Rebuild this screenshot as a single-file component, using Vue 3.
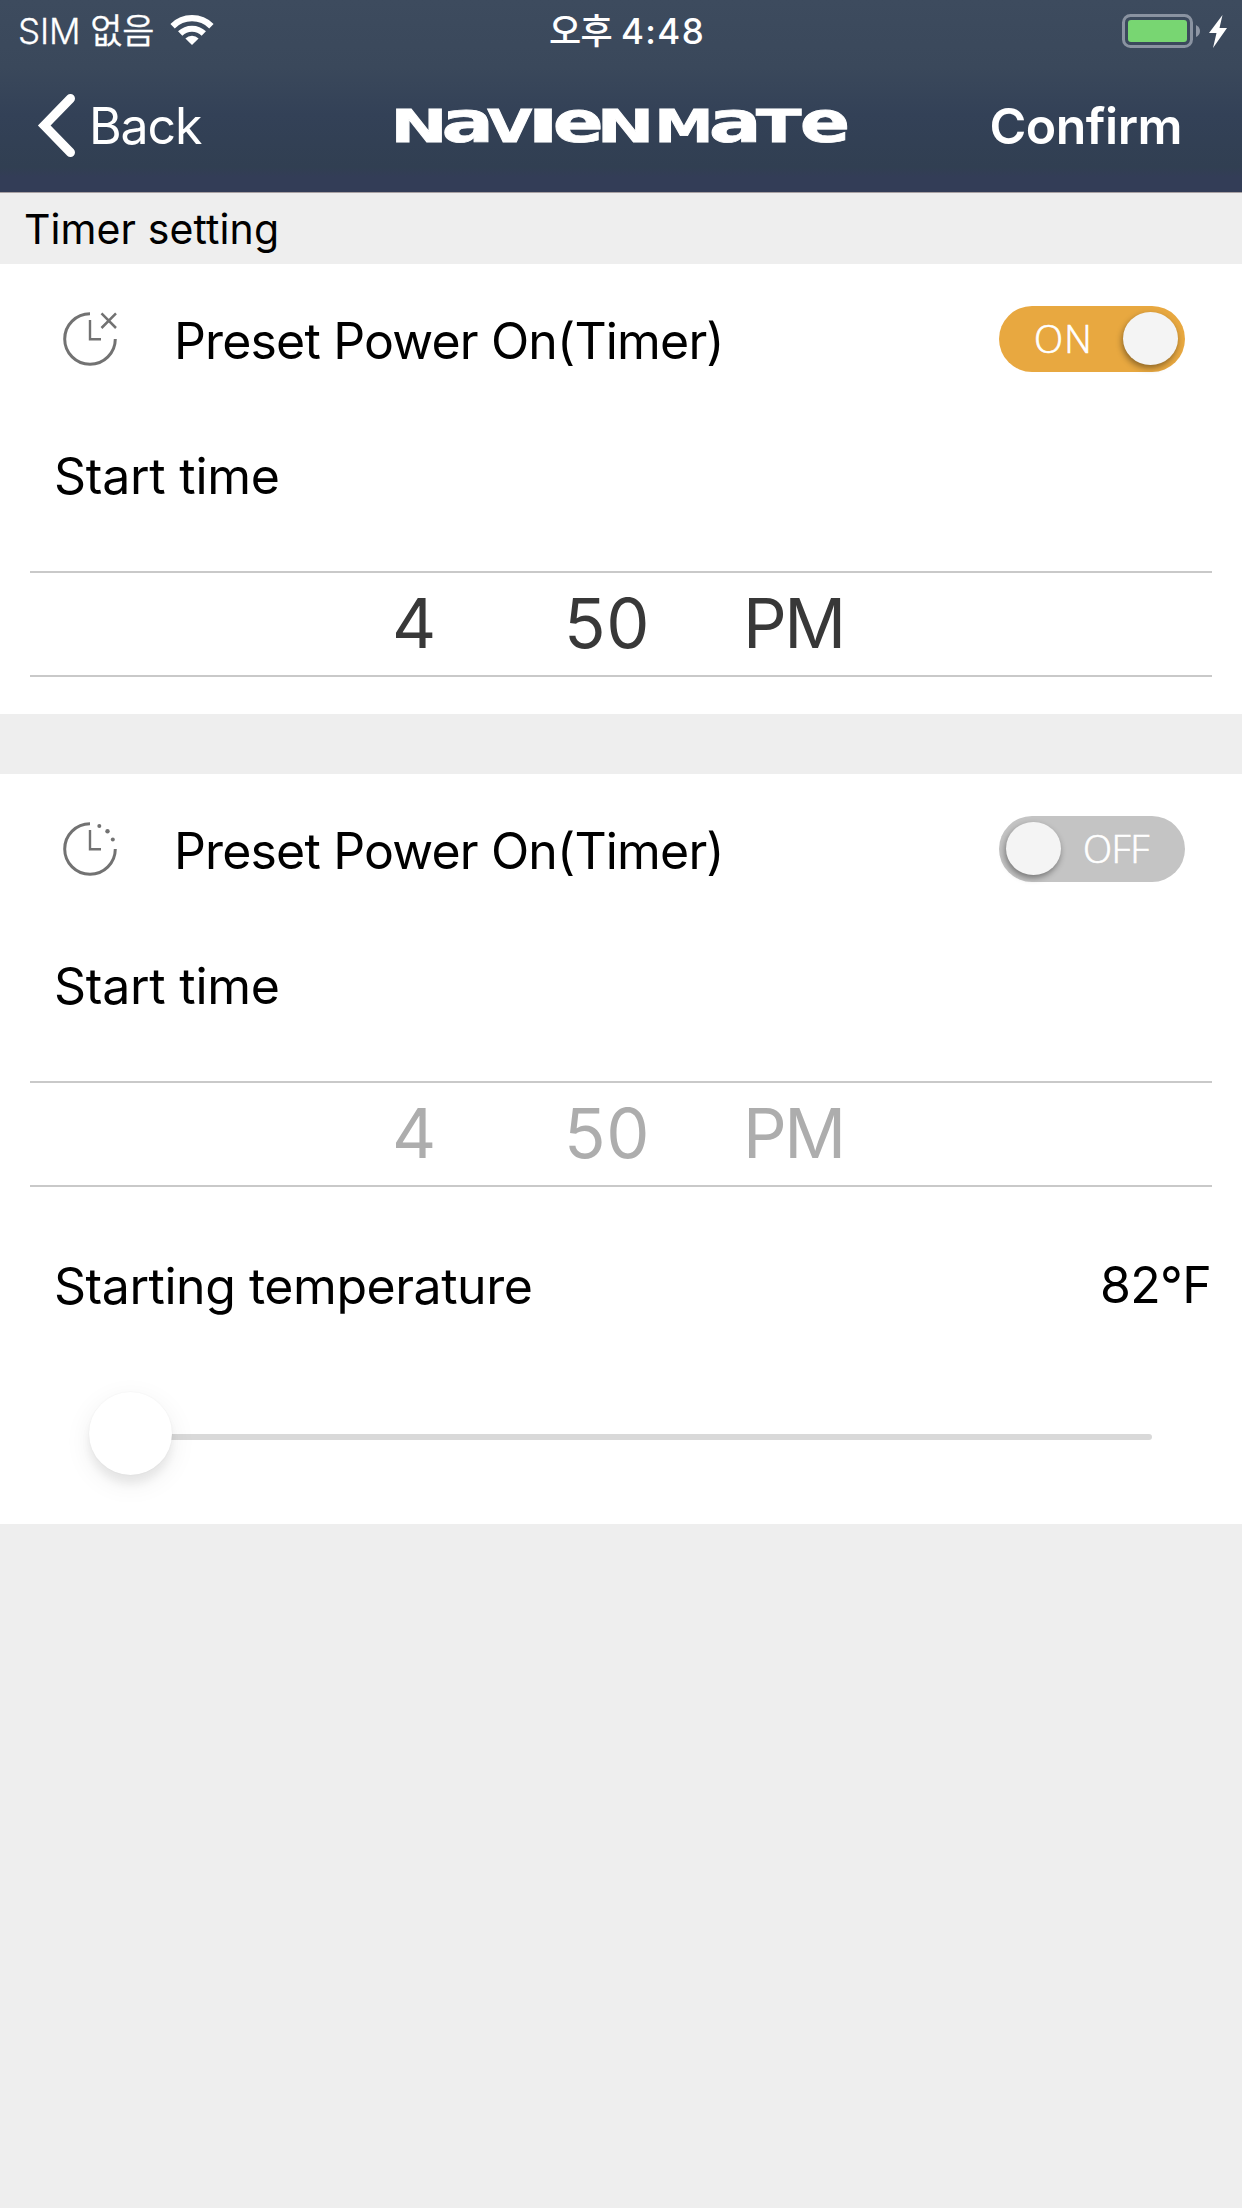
<script setup>
import { ref } from 'vue'

// Wordmark runs: lowercase forms are enlarged so every letter shares the cap height.
const wordmark = [
  { ch: 'N', x: 390.4, size: 44.5, width: 57 },
  { ch: 'a', x: 441.4, size: 57, width: 52.5 },
  { ch: 'V', x: 487.3, size: 44.5, width: 45 },
  { ch: 'I', x: 527.2, size: 44.5, width: 31.7 },
  { ch: 'e', x: 552.8, size: 57, width: 51 },
  { ch: 'N', x: 596.7, size: 44.5, width: 57.6 },
  { ch: 'M', x: 654.6, size: 44.5, width: 58.9 },
  { ch: 'a', x: 708.8, size: 57, width: 53 },
  { ch: 'T', x: 756, size: 44.5, width: 45.5 },
  { ch: 'e', x: 799.8, size: 57, width: 50.5 }
]

const timers = ref([
  { id: 'off', label: 'Preset Power On(Timer)', on: true, time: ['4', '50', 'PM'] },
  { id: 'on', label: 'Preset Power On(Timer)', on: false, time: ['4', '50', 'PM'], temperature: '82°F' }
])
</script>

<template>
  <div class="screen">
    <header class="header">
      <div class="status">
        <div class="status-left">
          <span class="carrier">SIM 없음</span>
          <svg class="wifi" width="44" height="32" viewBox="170 14 44 32">
            <g fill="none" stroke="#fff" stroke-width="6.2">
              <path d="M172.6 26.2A27.5 27.5 0 0 1 211.4 26.2" />
              <path d="M180.2 33.5A17 17 0 0 1 203.8 33.5" />
            </g>
            <path d="M192 45L185.4 38.6A9.3 9.3 0 0 1 198.6 38.6Z" fill="#fff" />
          </svg>
        </div>
        <div class="clock">오후 <span class="digits">4:48</span></div>
        <div class="status-right">
          <svg width="108" height="36" viewBox="1121 12 108 36">
            <rect x="1123.5" y="14.5" width="68" height="31" rx="7" fill="none" stroke="#8a93a1" stroke-width="3" />
            <rect x="1128" y="19" width="59" height="22" rx="3" fill="#78d672" />
            <path d="M1196 24Q1200 26 1200 30Q1200 34 1196 36Z" fill="#8f97a5" />
            <path d="M1222.5 14L1209 32H1216.5L1213 47L1227 27H1219.5Z" fill="#fff" />
          </svg>
        </div>
      </div>
      <nav class="nav">
        <div class="back">
          <svg width="40" height="66" viewBox="36 94 40 66">
            <path d="M70.5 99.5L44.2 126.5L70.5 153.5" fill="none" stroke="#fff" stroke-width="9" stroke-linecap="round" stroke-linejoin="miter" />
          </svg>
          <span>Back</span>
        </div>
        <svg class="logo" width="480" height="84" viewBox="382 84 480 84">
          <text y="142.4" fill="#fff" stroke="#fff" stroke-width="0.8"><tspan
            v-for="(g, i) in wordmark" :key="i" :x="g.x" :font-size="g.size" :textLength="g.width" lengthAdjust="spacingAndGlyphs">{{ g.ch }}</tspan></text>
        </svg>
        <span class="confirm">Confirm</span>
      </nav>
    </header>

    <h2 class="section">Timer setting</h2>

    <section v-for="t in timers" :key="t.id" class="card">
      <div class="preset">
        <svg class="icon" width="56" height="56" viewBox="0 0 56 56">
          <g fill="none" stroke="#727272">
            <path d="M28 2.700A25.300 25.300 0 1 0 53.300 28" stroke-width="3" />
            <path d="M28 9V28.200H39" stroke-width="2.400" />
            <path v-if="t.on" d="M39.500 2.300L54 17M54 2.300L39.500 17" stroke-width="2.500" />
          </g>
          <g v-if="!t.on" fill="#727272">
            <circle cx="37.300" cy="5" r="2" />
            <circle cx="45.500" cy="10.300" r="2.200" />
            <circle cx="50.800" cy="18.500" r="2" />
          </g>
        </svg>
        <span class="preset-label">{{ t.label }}</span>
        <div class="toggle" :class="{ on: t.on }" @click="t.on = !t.on">
          <span v-if="t.on" class="word">ON</span>
          <i class="knob"></i>
          <span v-if="!t.on" class="word">OFF</span>
        </div>
      </div>
      <div class="start">Start time</div>
      <div class="picker" :class="{ dim: !t.on }">
        <span class="hour">{{ t.time[0] }}</span>
        <span class="minute">{{ t.time[1] }}</span>
        <span class="period">{{ t.time[2] }}</span>
      </div>
      <template v-if="t.temperature">
        <div class="temp">
          <span class="temp-label">Starting temperature</span>
          <span class="temp-value">{{ t.temperature }}</span>
        </div>
        <div class="track"><i class="thumb"></i></div>
      </template>
    </section>
  </div>
</template>

<style>
body { background: #eee; }
</style>

<style scoped>
.screen {
  width: 1242px;
  height: 2208px;
  overflow: hidden;
  background: #eee;
  color: #000;
  font-family: Inter, 'Noto Sans CJK KR', sans-serif;
  font-size: 50px;
  line-height: 60px;
  white-space: nowrap;
}
.header {
  box-sizing: border-box;
  height: 193px;
  border-bottom: 1px solid #a8a1a3;
  background: linear-gradient(#3d4b5e 0%, #3a485b 35%, #334157 60%, #313f52 87%, #333d57 92%);
  color: #fff;
}
.status {
  display: grid;
  grid-template-columns: 1fr auto 1fr;
  height: 62px;
  align-items: center;
  font-size: 35px;
  line-height: 42px;
}
.status-left { display: flex; align-items: center; padding-left: 18px; }
.carrier { width: 136px; font-weight: 350; letter-spacing: -0.1px; -webkit-text-stroke: 0.3px #fff; }
.wifi { margin-left: 16px; margin-top: -2px; }
.clock { padding-left: 12px; font-weight: 500; letter-spacing: -0.6px; }
.digits { font-weight: 550; letter-spacing: 1.4px; }
.status-right { display: flex; justify-content: flex-end; padding-right: 13px; }
.status svg, .nav svg { display: block; }
.nav {
  display: grid;
  grid-template-columns: 382px 480px 1fr;
  align-items: center;
  height: 128px;
}
.back { display: flex; align-items: center; padding-left: 36px; gap: 13px; letter-spacing: -1.1px; }
.logo { font-family: 'DejaVu Sans', sans-serif; font-weight: 700; }
.confirm { justify-self: end; padding-right: 60px; font-weight: 600; letter-spacing: -0.5px; }
.section {
  margin: 0;
  height: 71px;
  padding-left: 24px;
  font-size: 41px;
  font-weight: 400;
  line-height: 72px;
  letter-spacing: 0.1px;
}
.card {
  height: 450px;
  background: #fff;
}
.card + .card { height: 750px; margin-top: 60px; }
.preset { display: flex; align-items: center; height: 150px; }
.icon { margin-left: 62px; }
.preset-label { margin-left: 56px; padding-top: 4px; letter-spacing: -0.84px; }
.toggle {
  display: flex;
  align-items: center;
  width: 186px;
  height: 66px;
  margin-left: auto;
  margin-right: 57px;
  border-radius: 33px;
  background: #c4c4c4;
  color: #fff;
}
.toggle.on { background: #e8a840; }
.knob {
  width: 55px;
  height: 53px;
  margin: -1px 0 0 7px;
  border-radius: 50%;
  background: #f4f4f4;
  box-shadow: -1px 3px 6px rgba(0, 0, 0, 0.4);
}
.toggle.on .knob { margin: -1px 7px 0 auto; }
.word {
  margin-left: 22px;
  padding-bottom: 2px;
  font: 300 38px/50px 'Open Sans', sans-serif;
  letter-spacing: -0.5px;
  -webkit-text-stroke: 0.7px #fff;
}
.toggle.on .word { margin-left: 35px; letter-spacing: 1.2px; }
.start { height: 124px; padding-left: 54px; line-height: 124px; letter-spacing: -0.25px; }
.picker {
  display: flex;
  box-sizing: border-box;
  height: 106px;
  margin: 33px 30px 0;
  border: solid #c9c9c9;
  border-width: 2px 0;
  color: #383838;
  font-size: 68.5px;
  line-height: 101px;
}
.picker.dim { color: #adadad; }
.hour { width: 172px; padding-left: 362px; }
.minute { width: 179px; letter-spacing: 0.7px; }
.period { letter-spacing: -2.5px; }
.temp {
  display: flex;
  justify-content: space-between;
  height: 120px;
  margin: 38px 31px 0 54px;
  line-height: 123px;
}
.temp-label { letter-spacing: -0.46px; }
.temp-value { letter-spacing: -0.7px; line-height: 121px; }
.track {
  position: relative;
  height: 6px;
  margin: 89px 90px 0;
  border-radius: 3px;
  background: #d9d9d9;
}
.thumb {
  position: absolute;
  left: -1px;
  top: -42px;
  width: 83px;
  height: 83px;
  border-radius: 50%;
  background: #fff;
  box-shadow: 0 0 2px rgba(0, 0, 0, 0.05), 0 9px 9px rgba(0, 0, 0, 0.06), 0 8px 28px rgba(0, 0, 0, 0.07);
}
</style>
